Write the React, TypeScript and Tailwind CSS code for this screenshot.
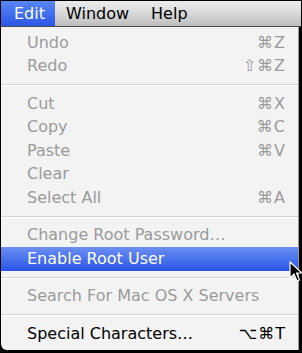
import React from 'react';

type Item = { label: string; shortcut?: string; enabled?: boolean; selected?: boolean } | 'sep';

const items: Item[] = [
  { label: 'Undo', shortcut: '⌘Z' },
  { label: 'Redo', shortcut: '⇧⌘Z' },
  'sep',
  { label: 'Cut', shortcut: '⌘X' },
  { label: 'Copy', shortcut: '⌘C' },
  { label: 'Paste', shortcut: '⌘V' },
  { label: 'Clear' },
  { label: 'Select All', shortcut: '⌘A' },
  'sep',
  { label: 'Change Root Password…' },
  { label: 'Enable Root User', enabled: true, selected: true },
  'sep',
  { label: 'Search For Mac OS X Servers' },
  'sep',
  { label: 'Special Characters…', shortcut: '⌥⌘T', enabled: true },
];

function Cursor() {
  return (
    <svg className="absolute left-[289px] top-[261px]" width="14" height="22" viewBox="0 0 14 22">
      <path d="M1 1 L1 17 L5 13 L8 20 L10.5 19 L7.5 12 L13 12 Z" fill="#000" stroke="#fff" strokeWidth="1.2" strokeLinejoin="round" />
    </svg>
  );
}

export default function App() {
  return (
    <div
      className="relative w-[302px] h-[353px] bg-black p-[1px] pb-[2px] overflow-hidden"
      style={{ fontFamily: '"DejaVu Sans", "Liberation Sans", sans-serif' }}
    >
      {/* Menu bar */}
      <div className="flex h-[26px] items-stretch border-b border-[#4a4a4a] bg-gradient-to-b from-[#ececec] via-[#d9d9d9] to-[#bdbdbd] text-[16px] text-black">
        <div className="flex items-center bg-gradient-to-b from-[#5a86f5] to-[#2c55e6] pl-[13px] pr-[10px] text-white">Edit</div>
        <div className="flex items-center px-[11px]">Window</div>
        <div className="flex items-center pl-[11px]">Help</div>
      </div>

      {/* Menu */}
      <div className="flex h-[323px] w-[297px] flex-col rounded-bl-[6px] bg-[#f3f3f3] pt-[4px] shadow-[1px_0_0_#9a9a9a]">
        {items.map((it, i) =>
          it === 'sep' ? (
            <div key={i} className="flex h-[14px] flex-col justify-center">
              <div className="h-px bg-[#d4d4d4]" />
              <div className="h-px bg-white" />
            </div>
          ) : (
            <div
              key={i}
              className={
                'flex h-[23.5px] items-center justify-between pl-[26px] pr-[12px] text-[16px] ' +
                (it.selected
                  ? 'bg-gradient-to-b from-[#6b8ff4] to-[#2a52e3] text-white'
                  : it.enabled
                  ? 'text-black'
                  : 'text-[#9b9b9b]')
              }
            >
              <span>{it.label}</span>
              {it.shortcut && <span className="tracking-[1px]">{it.shortcut}</span>}
            </div>
          )
        )}
      </div>
      <Cursor />
    </div>
  );
}
